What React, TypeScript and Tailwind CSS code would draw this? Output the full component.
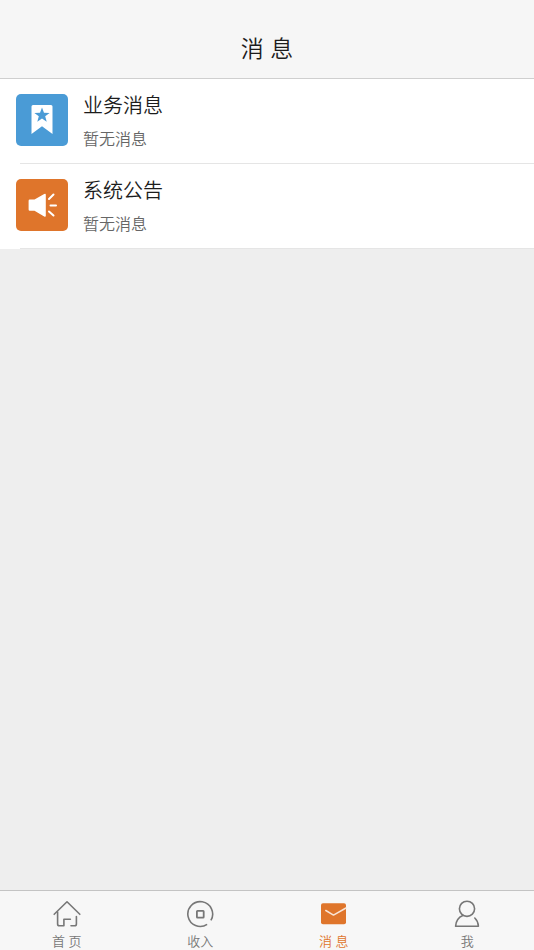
import React, { useState } from 'react'
import clsx from 'clsx'

function HomeIcon() {
  return (
    <svg width="28" height="28" viewBox="0 0 28 28" fill="none" stroke="currentColor" strokeWidth="1.6" strokeLinecap="round" strokeLinejoin="round">
      <path d="M1.2 14.3 14 1.8l12.8 12.5" />
      <path d="M4.6 12v12q0 1.8 1.8 1.8h4.5v-6.6h6.5" />
      <path d="M23.4 16.5v7.5q0 1.8-1.8 1.8H18" />
    </svg>
  )
}

function IncomeIcon() {
  return (
    <svg width="28" height="28" viewBox="0 0 28 28" fill="none" stroke="currentColor" strokeWidth="1.6">
      <path d="M21.1 24.4A12.4 12.4 0 1 1 24.9 20.4" />
      <rect x="10.9" y="10.9" width="6.8" height="6.8" rx="0.6" strokeWidth="1.8" />
    </svg>
  )
}

function MailIcon() {
  return (
    <svg width="28" height="28" viewBox="0 0 28 28" fill="none">
      <rect x="1" y="3.2" width="25" height="21" rx="2" fill="currentColor" />
      <path d="m5.8 10.5 7.7 4.6L26 8" stroke="#f9e4d5" strokeWidth="1.5" strokeLinecap="round" strokeLinejoin="round" />
    </svg>
  )
}

function UserIcon() {
  return (
    <svg width="28" height="28" viewBox="0 0 28 28" fill="none" stroke="currentColor" strokeWidth="1.6" strokeLinecap="round" strokeLinejoin="round">
      <circle cx="14" cy="8.8" r="7.6" />
      <path d="M9.8 15.6C5.6 17.4 3 21 2.6 26.2h22.8c-.3-3.8-1.5-6.3-3.6-8.2" />
    </svg>
  )
}

function BookmarkIcon() {
  return (
    <svg width="52" height="52" viewBox="0 0 52 52">
      <path d="M17 11h18q1.500 0 1.500 1.500V40L26 32.200 15.500 40V12.500Q15.500 11 17 11Z" fill="#fff" />
      <path d="m26 13.400 2 5.300 5.600.2-4.400 3.400 1.500 5.400-4.700-3.100-4.700 3.100 1.500-5.400-4.400-3.400 5.600-.2Z" fill="#4a9bd6" />
    </svg>
  )
}

function HornIcon() {
  return (
    <svg width="52" height="52" viewBox="0 0 52 52">
      <path d="M13.800 20.500h4.700L28.200 15q1.600-.8 1.600.8v21q0 1.600-1.600.8l-9.700-5.800h-4.700q-1.200 0-1.200-1.200v-8.900q0-1.200 1.200-1.200Z" fill="#fff" />
      <path d="m33 20 4.500-4.500M34.500 26.400h5.500M33 32.500l4.500 4" stroke="#fff" strokeWidth="2" strokeLinecap="round" />
    </svg>
  )
}

const MESSAGES = [
  { title: '业务消息', detail: '暂无消息', icon: BookmarkIcon, color: 'bg-[#4a9bd6]' },
  { title: '系统公告', detail: '暂无消息', icon: HornIcon, color: 'bg-[#df752b]' },
]

const TABS = [
  { label: '首 页', icon: HomeIcon },
  { label: '收入', icon: IncomeIcon },
  { label: '消 息', icon: MailIcon },
  { label: '我', icon: UserIcon },
]

export default function App() {
  const [active, setActive] = useState('消 息')

  return (
    <div className="flex min-h-screen flex-col bg-[#eeeeee] font-['Liberation_Sans','Noto_Sans_CJK_SC',sans-serif] font-[350] text-[#1c1c1c]">
      <header className="border-b border-[#cfcfcf] bg-[#f6f6f6] pt-8 pb-3">
        <h1 className="text-center text-[23px] leading-[34px] font-[350]">消 息</h1>
      </header>

      {/* Message list */}
      <main className="flex-1">
        <ul className="bg-white">
          {MESSAGES.map(({ title, detail, icon: Icon, color }) => (
            <li key={title}>
              <button className="flex w-full items-center gap-[15px] px-4 pt-[9px] pb-[11px] text-left">
                <span className={clsx('shrink-0 overflow-hidden rounded-[5px]', color)}>
                  <Icon />
                </span>
                <span className="flex flex-col gap-1.5 pt-0.5">
                  <span className="text-xl leading-8">{title}</span>
                  <span className="text-base leading-6 text-[#666666]">{detail}</span>
                </span>
              </button>
              <div className="ml-5 border-b border-[#e5e5e5]" />
            </li>
          ))}
        </ul>
      </main>

      {/* Bottom tabs */}
      <nav className="sticky bottom-0 grid grid-cols-4 border-t border-[#c4c4c4] bg-[#f7f7f7]">
        {TABS.map(({ label, icon: Icon }) => (
          <button
            key={label}
            onClick={() => setActive(label)}
            className={clsx(
              'flex flex-col items-center gap-1.5 pt-[9px] text-[13px] leading-4',
              active === label ? 'text-[#df752b]' : 'text-[#777777]'
            )}
          >
            <Icon />
            {label}
          </button>
        ))}
      </nav>
    </div>
  )
}
